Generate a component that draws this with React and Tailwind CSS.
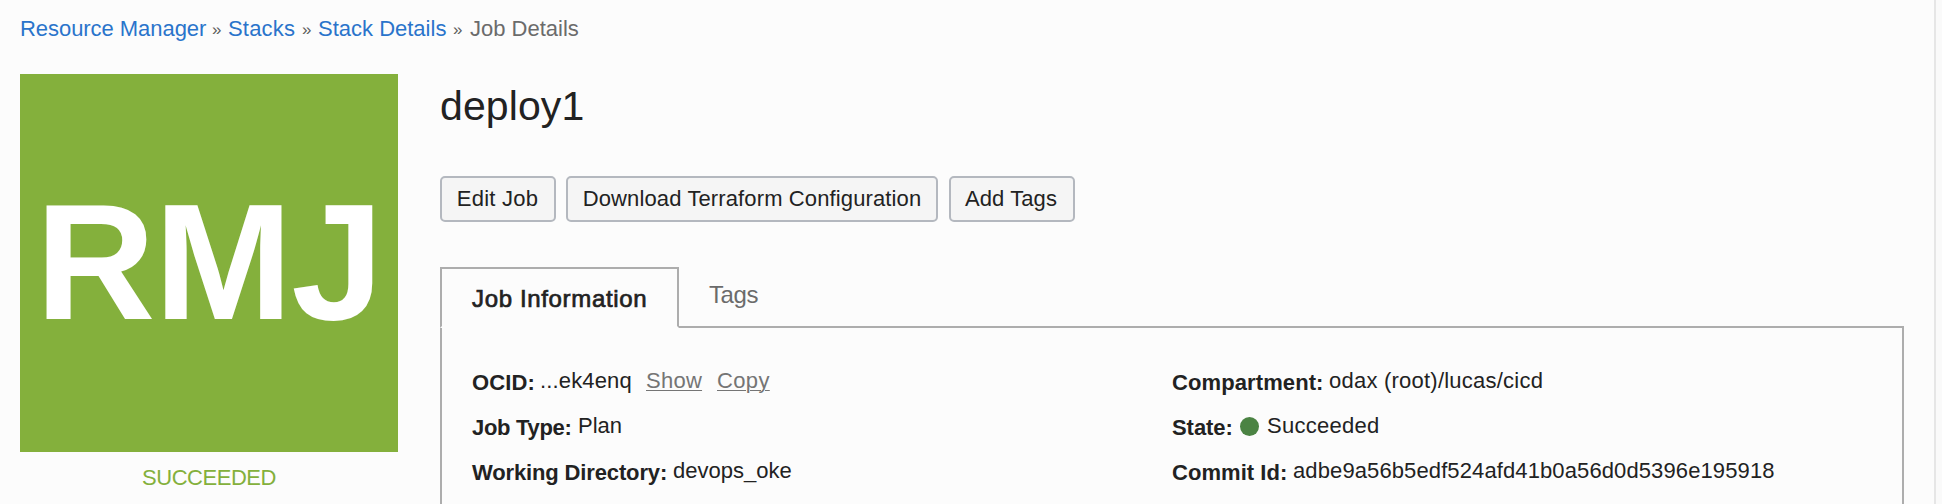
const BUTTONS = [
  { label: 'Edit Job', className: 'w-[116px] mr-[10px] pr-px tracking-[0.25px]' },
  { label: 'Download Terraform Configuration', className: 'w-[372px] mr-[11px] tracking-[0.12px]' },
  { label: 'Add Tags', className: 'w-[126px] pr-[2px] tracking-[0.1px]' },
];

function Separator({ className }) {
  return <span className={`shrink-0 text-[17px] leading-[31px] text-[#5c5c5c] ${className}`}>»</span>;
}

function Breadcrumb() {
  return (
    <nav className="flex h-[30px] whitespace-nowrap text-[#2a74cb]">
      <a className="w-[192px] shrink-0 tracking-[-0.05px]">Resource Manager</a>
      <Separator className="w-[16px]" />
      <a className="w-[74px] shrink-0 tracking-[0.2px]">Stacks</a>
      <Separator className="w-[16px]" />
      <a className="w-[135px] shrink-0">Stack Details</a>
      <Separator className="w-[17px]" />
      <span className="text-[#6b6b6b]">Job Details</span>
    </nav>
  );
}

function Row({ label, labelClass, children }) {
  return (
    <div className="flex h-[45px] items-start whitespace-nowrap">
      <dt className={`shrink-0 font-bold leading-[45px] ${labelClass}`}>{label}</dt>
      <dd className="flex leading-[41px]">{children}</dd>
    </div>
  );
}

function StatusTile() {
  return (
    <aside className="w-[378px] shrink-0">
      <div className="flex h-[378px] items-center justify-center bg-[#84b03c] pb-[3px] text-[166px] font-bold leading-[185px] tracking-[-1.1px] text-white">
        RMJ
      </div>
      <p className="mt-[11px] text-center tracking-[-0.47px] text-[#84b03c]">SUCCEEDED</p>
    </aside>
  );
}

function JobTabs() {
  return (
    <div className="mt-[45px] flex h-[59px] items-start">
      <div className="z-10 h-[61px] w-[239px] shrink-0 border-2 border-[#adadad] border-b-[#fcfcfc] bg-[#fcfcfc] pl-[30px] pt-[15px] text-[24px] leading-[30px] tracking-[0.65px] [-webkit-text-stroke:0.7px_#222]">
        Job Information
      </div>
      <div className="pl-[30px] pt-[13px] text-[24px] leading-[30px] tracking-[-0.4px] text-[#6b6b6b]">Tags</div>
    </div>
  );
}

function JobInformation() {
  return (
    <dl className="flex h-[240px] border-2 border-[#adadad] pl-[30px] pt-[32px]">
      <div className="w-[700px] shrink-0">
        <Row label="OCID:" labelClass="w-[68px] tracking-[0.1px]">
          <span className="w-[106px] tracking-[0.15px]">...ek4enq</span>
          <a className="w-[71px] text-[#757575]">
            <span className="tracking-[0.25px] underline decoration-1 underline-offset-2">Show</span>
          </a>
          <a className="tracking-[0.35px] text-[#757575] underline decoration-1 underline-offset-2">Copy</a>
        </Row>
        <Row label="Job Type:" labelClass="w-[106px] tracking-[-0.3px]">Plan</Row>
        <Row label="Working Directory:" labelClass="w-[201px] tracking-[-0.14px]">devops_oke</Row>
      </div>
      <div>
        <Row label="Compartment:" labelClass="w-[157px] tracking-[0.1px]">
          <span className="tracking-[0.23px]">odax (root)/lucas/cicd</span>
        </Row>
        <Row label="State:" labelClass="w-[68px] tracking-[-0.05px]">
          <span className="mr-[8px] mt-[12px] size-[19px] rounded-full bg-[#4b8343]" />
          <span className="tracking-[0.27px]">Succeeded</span>
        </Row>
        <Row label="Commit Id:" labelClass="w-[121px] tracking-[0.05px]">
          <span className="tracking-[0.11px]">adbe9a56b5edf524afd41b0a56d0d5396e195918</span>
        </Row>
      </div>
    </dl>
  );
}

export default function App() {
  return (
    <div className="h-[504px] overflow-hidden bg-[#fafafa] font-['Liberation_Sans',sans-serif] text-[22px] leading-[30px] text-[#222]">
      <main className="h-full w-[1936px] border-r-2 border-[#e6e6e6] bg-[#fcfcfc] pl-5 pr-[30px] pt-[14px]">
        <Breadcrumb />
        <div className="mt-[30px] flex gap-[42px]">
          <StatusTile />
          <section className="min-w-0 flex-1 pt-2">
            <h1 className="text-[41px] leading-[48px] tracking-[0.1px]">deploy1</h1>
            <div className="mt-[46px] flex">
              {BUTTONS.map(({ label, className }) => (
                <button
                  key={label}
                  className={`h-[46px] shrink-0 whitespace-nowrap rounded-[5px] border-2 border-[#b4b8bf] bg-[#f5f5f5] text-center leading-[40px] ${className}`}
                >
                  {label}
                </button>
              ))}
            </div>
            <JobTabs />
            <JobInformation />
          </section>
        </div>
      </main>
    </div>
  );
}
